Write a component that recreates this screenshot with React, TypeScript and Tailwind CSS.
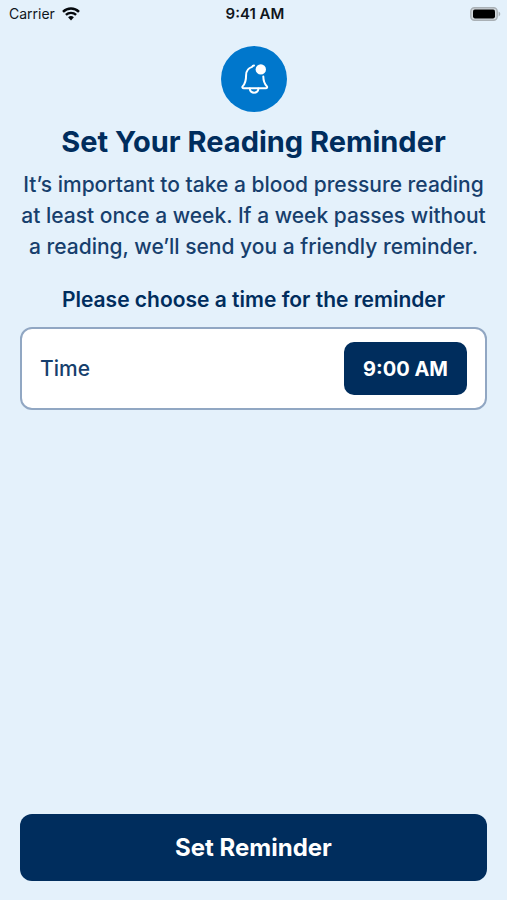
import React, { useState } from "react";

const times = ["9:00 AM", "12:00 PM", "6:00 PM", "9:00 PM"];

// Top bar with carrier, clock and battery
const StatusBar = () => {
  return (
    <div className="grid grid-cols-3 items-center h-7 pl-[9px] pr-1.5 text-sm text-[#10161c]">
      <div className="flex items-center gap-[7px]">
        <span>Carrier</span>
        <svg width="18" height="14" viewBox="0 0 18 14" fill="none" aria-hidden="true">
          <path d="M1 4.8a11.6 11.6 0 0 1 16 0" stroke="#05090d" strokeWidth="2.5" />
          <path d="M3.9 7.9a7.4 7.4 0 0 1 10.2 0" stroke="#05090d" strokeWidth="2.4" />
          <path d="M9 13.4 6.1 10.3a4.4 4.4 0 0 1 5.8 0Z" fill="#05090d" />
        </svg>
      </div>
      <span className="text-center text-[15px] font-semibold">9:41 AM</span>
      <svg className="justify-self-end" width="31" height="14" viewBox="0 0 31 14" aria-hidden="true">
        <rect x="0.8" y="0.8" width="26.4" height="12.4" rx="3.6" fill="#d3d9dd" stroke="#a9b0b5" strokeWidth="1.4" />
        <rect x="3" y="2.6" width="22" height="8.8" rx="1.8" fill="#000" />
        <path d="M28.6 4.6c2.2.8 2.2 4 0 4.8Z" fill="#a9b0b5" />
      </svg>
    </div>
  );
};

const ReminderIcon = () => {
  return (
    <svg width="66" height="66" viewBox="0 0 66 66" fill="none" aria-hidden="true">
      <circle cx="33" cy="33" r="33" fill="#0077cc" />
      <g stroke="#fff" strokeWidth="2" strokeLinecap="round" strokeLinejoin="round">
        <path d="M33 19.5c-1 .1-1.5.5-1.9 1.4-3.7 1.2-6 4.2-6 8.3 0 5.2-.6 8-3.3 10.9-.9 1-.4 2.2 1 2.2h21.9c1.4 0 1.9-1.2 1-2.2-2.5-2.7-3.3-5.4-3.4-9.6" />
        <path d="M28.8 42.6c0 5.4 8.6 5.4 8.6 0" />
      </g>
      <circle cx="39.8" cy="23.4" r="5.2" fill="#fff" />
    </svg>
  );
};

const App = () => {
  const [timeIndex, setTimeIndex] = useState<number>(0);

  const handleTimeChange = () => {
    setTimeIndex((timeIndex + 1) % times.length);
  };

  return (
    <div className="flex flex-col min-h-screen bg-[#e4f1fb] text-[#002d5d] font-[Inter,'Noto_Sans',sans-serif]">
      <StatusBar />

      <main className="flex flex-col flex-1 px-5 pt-[18px] pb-[19px]">
        <div className="flex flex-col items-center text-center">
          <ReminderIcon />
          <h1 className="mt-3 text-[29px] leading-9 font-bold">Set Your Reading Reminder</h1>
          <p className="mt-[9px] text-[21px] leading-[31px] font-medium text-[#173f6d]">
            It’s important to take a blood pressure reading at least once a week. If a week passes without a
            reading, we’ll send you a friendly reminder.
          </p>
          <h2 className="mt-[22px] text-[21px] leading-[31px] font-semibold">
            Please choose a time for the reminder
          </h2>
        </div>

        {/* Time row */}
        <div className="flex items-center justify-between mt-3 py-[13px] px-[18px] bg-white border-2 border-[#91a7c3] rounded-xl">
          <label htmlFor="time" className="text-[21px] font-medium text-[#173f6d]">
            Time
          </label>
          <button
            id="time"
            type="button"
            onClick={handleTimeChange}
            className="h-[53px] px-[19px] rounded-[10px] bg-[#002d5d] text-white text-[20px] font-bold"
          >
            {times[timeIndex]}
          </button>
        </div>

        <button type="button" className="mt-auto h-[67px] rounded-xl bg-[#002d5d] text-white text-2xl font-bold">
          Set Reminder
        </button>
      </main>
    </div>
  );
};

export default App;
